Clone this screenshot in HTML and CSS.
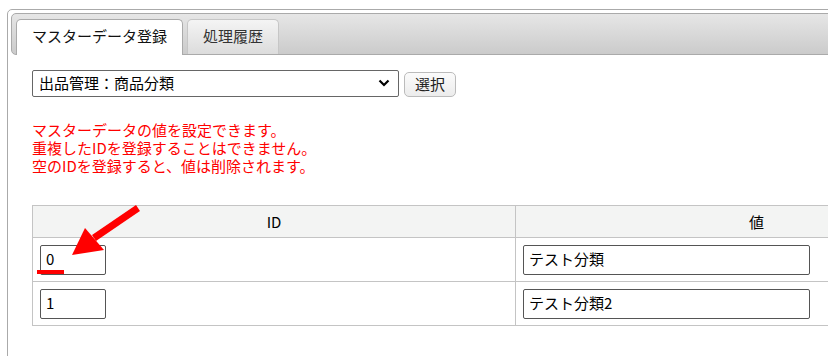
FILE: index.html
```html
<!DOCTYPE html>
<html lang="ja">
<head>
  <meta charset="UTF-8">
  <title>マスターデータ登録</title>
  <link rel="stylesheet" href="styles.css">
</head>
<body>
  <div class="tabs">
    <ul class="tab-nav">
      <li class="tab active">マスターデータ登録</li>
      <li class="tab">処理履歴</li>
    </ul>

    <div class="tab-panel">
      <div class="picker">
        <div class="select">
          <span>出品管理：商品分類</span>
          <svg class="chevron" width="12" height="8" viewBox="0 0 12 8"><path d="M1.5 1.5 L6 6 L10.5 1.5" fill="none" stroke="#000" stroke-width="2.2"/></svg>
        </div>
        <button class="btn">選択</button>
      </div>

      <div class="notice">
        <div>マスターデータの値を設定できます。</div>
        <div>重複したIDを登録することはできません。</div>
        <div>空のIDを登録すると、値は削除されます。</div>
      </div>

      <table class="master">
        <thead>
          <tr><th class="col-id">ID</th><th>値</th></tr>
        </thead>
        <tbody>
          <tr>
            <td><div class="field field-id">0</div></td>
            <td><div class="field field-val">テスト分類</div></td>
          </tr>
          <tr>
            <td><div class="field field-id">1</div></td>
            <td><div class="field field-val">テスト分類2</div></td>
          </tr>
        </tbody>
      </table>
    </div>
  </div>

  <!-- annotation drawn over the screenshot -->
  <svg class="arrow" width="80" height="70" viewBox="0 0 80 70">
    <line x1="72" y1="4" x2="28" y2="34" stroke="#f00" stroke-width="7"/>
    <polygon points="6,51 19,24 38,46" fill="#f00"/>
  </svg>
  <div class="underline"></div>
</body>
</html>
```

FILE: styles.css
```css
body {
  margin: 9px 0 0 7px;
  font-family: "Noto Sans CJK JP", "Noto Sans", sans-serif;
  font-size: 15px;
  color: #222;
  background: #fff;
  overflow: hidden;
}

.tabs {
  width: 1000px;
  min-height: 360px;
  border: 1px solid #aaa;
  border-radius: 5px;
  padding: 3px;
  box-sizing: border-box;
}

.tab-nav {
  list-style: none;
  margin: 0;
  padding: 5px 4px 0;
  height: 35px;
  display: flex;
  gap: 4px;
  border: 1px solid #aaa;
  border-radius: 5px;
  background: linear-gradient(#e6e6e6, #cbcbcb);
}

.tab {
  height: 35px;
  box-sizing: border-box;
  padding: 0 15px 4px;
  display: flex;
  align-items: center;
  border: 1px solid #c6c6c6;
  border-bottom: none;
  border-radius: 5px 5px 0 0;
  background: linear-gradient(#f4f4f4, #dcdcdc);
  color: #333;
  line-height: 1;
}

.tab.active {
  height: 36px;
  padding-bottom: 5px;
  background: #fff;
  border-color: #aaa;
  color: #111;
}

.tab-panel {
  padding: 15px 21px;
}

.picker {
  display: flex;
  align-items: center;
  gap: 5px;
}

.select {
  width: 367px;
  height: 27px;
  box-sizing: border-box;
  border: 1px solid #666;
  border-radius: 2px;
  padding: 0 8px 2px 6px;
  display: flex;
  align-items: center;
  justify-content: space-between;
  color: #000;
}

.btn {
  width: 52px;
  height: 25px;
  margin-top: 2px;
  font-family: inherit;
  font-size: 15px;
  line-height: 1;
  color: #222;
  border: 1px solid #bbb;
  border-radius: 5px;
  background: linear-gradient(#fbfbfb, #ececec);
  padding: 0 0 2px;
}

.notice {
  margin: 24px 0 0;
  font-size: 15px;
  line-height: 18px;
  color: #f00;
}

.master {
  margin-top: 30px;
  width: 966px;
  border-collapse: collapse;
}

.master th,
.master td {
  border: 1px solid #c4c4c4;
}

.master th {
  height: 31px;
  padding: 0;
  background: #f3f4f3;
  font-weight: normal;
  color: #000;
}

.master .col-id {
  width: 482px;
}

.master td {
  height: 43px;
  padding: 0 7px;
}

.field {
  height: 30px;
  box-sizing: border-box;
  border: 1px solid #555;
  border-radius: 2px;
  padding: 0 5px 3px;
  display: flex;
  align-items: center;
  color: #000;
}

.field-id {
  width: 66px;
}

.field-val {
  width: 287px;
}

.arrow {
  position: absolute;
  left: 66px;
  top: 204px;
}

.underline {
  position: absolute;
  left: 37px;
  top: 270px;
  width: 27px;
  height: 4px;
  background: #f00;
}
```
